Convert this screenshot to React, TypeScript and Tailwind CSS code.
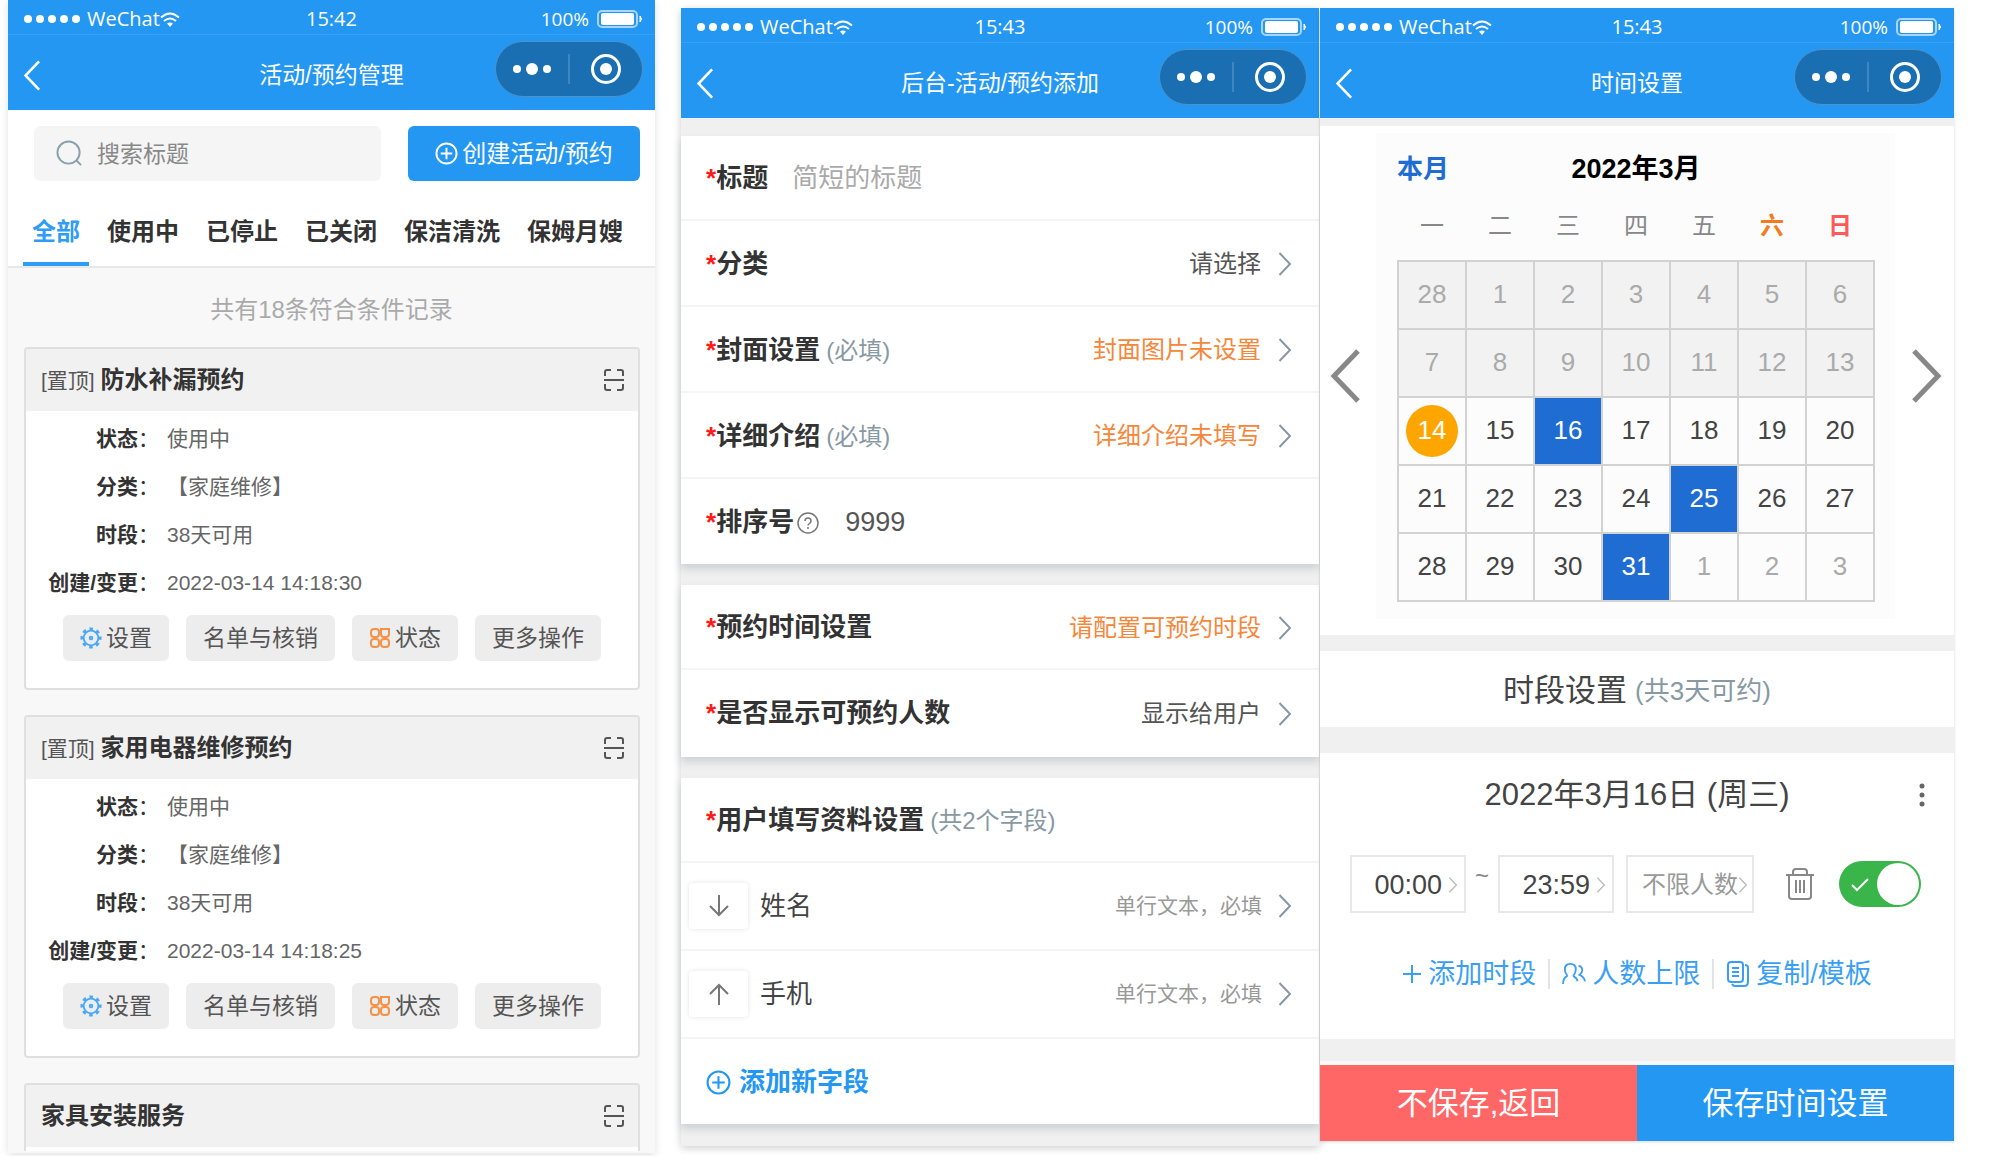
import { useState } from "react";

const tabs = ["全部", "使用中", "已停止", "已关闭", "保洁清洗", "保姆月嫂"];

const records = [
  { title: "防水补漏预约", created: "2022-03-14 14:18:30" },
  { title: "家用电器维修预约", created: "2022-03-14 14:18:25" },
];

const weekdays = ["一", "二", "三", "四", "五", "六", "日"];

const weeks = [
  [28, 1, 2, 3, 4, 5, 6],
  [7, 8, 9, 10, 11, 12, 13],
  [14, 15, 16, 17, 18, 19, 20],
  [21, 22, 23, 24, 25, 26, 27],
  [28, 29, 30, 31, 1, 2, 3],
];

const Chevron = ({ className, left }: { className: string; left?: boolean }) => (
  <svg viewBox="0 0 14 24" fill="none" stroke="currentColor" strokeWidth="2" className={className}>
    <path d={left ? "M12.5 1 2 12l10.5 11" : "M1.5 1 12 12 1.5 23"} />
  </svg>
);

const CirclePlus = ({ className }: { className: string }) => (
  <svg viewBox="0 0 24 24" fill="none" stroke="currentColor" strokeWidth="2" className={className}>
    <circle cx="12" cy="12" r="10.5" />
    <path d="M12 6v12M6 12h12" />
  </svg>
);

const ScanIcon = () => (
  <svg viewBox="0 0 22 22" fill="none" stroke="currentColor" strokeWidth="2" className="size-[22px]">
    <path d="M2 7V3q0-2 2-2h4M14 1h4q2 0 2 2v4M2 15v4q0 2 2 2h4M14 21h4q2 0 2-2v-4M1 11h20" />
  </svg>
);

const GearIcon = () => (
  <svg viewBox="0 0 24 24" fill="none" stroke="currentColor" className="size-[22px] text-[#4aa8f5]">
    <circle cx="12" cy="12" r="8" strokeWidth="2" />
    <circle cx="12" cy="12" r="10" strokeWidth="3" strokeDasharray="3.9 3.95" strokeDashoffset="2" />
    <circle cx="12" cy="12" r="1.500" strokeWidth="2" />
  </svg>
);

const GridIcon = () => (
  <svg viewBox="0 0 22 22" fill="none" stroke="currentColor" strokeWidth="2" className="size-[22px] text-[#f5924a]">
    <rect x="2" y="2" width="8" height="8" rx="3" />
    <path d="M12 2h8v5q0 3-3 3h-2q-3 0-3-3z" />
    <rect x="2" y="12" width="8" height="8" rx="3" />
    <rect x="12" y="12" width="8" height="8" rx="3" />
  </svg>
);

const Header = ({ time, title }: { time: string; title: string }) => (
  <header className="bg-[#2397f2] text-white">
    <div className="grid h-[35px] grid-cols-3 items-center border-b border-[#35a0f4] px-3 pt-1 font-['Open_Sans','Noto_Sans_CJK_SC',sans-serif] text-[20px]">
      <div className="ml-[3px] flex items-center">
        <svg viewBox="0 0 58 12" fill="currentColor" className="mr-1.5 h-3 w-[58px]">
          <circle cx="5" cy="6" r="4" />
          <circle cx="17" cy="6" r="4" />
          <circle cx="29" cy="6" r="4" />
          <circle cx="41" cy="6" r="4" />
          <circle cx="53" cy="6" r="4" />
        </svg>
        <span>WeChat</span>
        <svg viewBox="0 0 20 15" fill="none" stroke="currentColor" strokeWidth="2" className="h-[15px] w-5">
          <path d="M1 5.500q9-8 18 0M4 9q6-5 12 0" />
          <path d="M7 11.500q3-2 6 0L10 15z" fill="currentColor" stroke="none" />
        </svg>
      </div>
      <span className="text-center">{time}</span>
      <div className="flex items-center justify-end gap-2">
        <span className="text-[19px]">100%</span>
        <svg viewBox="0 0 46 18" className="h-[18px] w-[46px]">
          <rect x="1" y="1" width="39" height="16" rx="4" fill="none" stroke="#a8d5fa" strokeWidth="2" />
          <rect x="4" y="3" width="33" height="12" rx="2" fill="#fff" />
          <path d="M43 6q3 3 0 6z" fill="#fff" stroke="#fff" />
        </svg>
      </div>
    </div>
    <div className="grid h-[75px] grid-cols-[1fr_auto_1fr] px-3">
      <button aria-label="返回" className="ml-[3px] mt-6 h-8 w-5 justify-self-start">
        <Chevron left className="h-[31px] w-[18px]" />
      </button>
      <h1 className="mt-6 text-[23px] leading-8">{title}</h1>
      <div className="mt-1.5 flex h-14 w-[148px] items-center justify-self-end rounded-full border border-[#4a93cb] bg-[#1a6eb2]">
        <button aria-label="更多" className="flex flex-1 justify-center">
          <svg viewBox="0 0 40 14" fill="currentColor" className="h-3.5 w-10">
            <circle cx="5" cy="7" r="4" />
            <circle cx="20" cy="7" r="6" />
            <circle cx="35" cy="7" r="4" />
          </svg>
        </button>
        <span className="h-[30px] w-0.5 bg-[#3d86c0]" />
        <button aria-label="关闭" className="flex flex-1 justify-center">
          <svg viewBox="0 0 32 32" className="size-8">
            <circle cx="16" cy="16" r="13.500" fill="none" stroke="#fff" strokeWidth="3" />
            <circle cx="16" cy="16" r="6" fill="#fff" />
          </svg>
        </button>
      </div>
    </div>
  </header>
);

const CardHead = ({ title, pinned }: { title: string; pinned?: boolean }) => (
  <div className="flex h-[62px] items-center justify-between bg-[#f1f1f1] pl-[15px] pr-[13px] text-[#555]">
    <h2 className="text-[21px]">
      {pinned && <span>[置顶] </span>}
      <span className="text-[24px] font-bold text-[#333]">{title}</span>
    </h2>
    <button aria-label="扫码">
      <ScanIcon />
    </button>
  </div>
);

const RecordCard = ({ title, created }: { title: string; created: string }) => {
  const rows = [
    ["状态", "使用中"],
    ["分类", "【家庭维修】"],
    ["时段", "38天可用"],
    ["创建/变更", created],
  ];
  const action = "flex h-[46px] items-center gap-1 rounded-md bg-[#ededed] px-[17px] text-[23px] text-[#555]";

  return (
    <article className="rounded-sm border-2 border-[#dfdfdf] bg-white pb-[27px]">
      <CardHead title={title} pinned />
      <dl className="mt-1 mb-2 text-[21px] text-[#666]">
        {rows.map(([label, value]) => (
          <div key={label} className="flex h-12 items-center gap-2">
            <dt className="w-[133px] shrink-0 whitespace-nowrap text-right text-[#333]">
              <span className="font-bold">{label}</span>：
            </dt>
            <dd>{value}</dd>
          </div>
        ))}
      </dl>
      <div className="flex justify-center gap-[17px]">
        <button className={action}>
          <GearIcon />
          设置
        </button>
        <button className={action}>名单与核销</button>
        <button className={action}>
          <GridIcon />
          状态
        </button>
        <button className={action}>更多操作</button>
      </div>
    </article>
  );
};

const ManagePanel = () => {
  const [active, setActive] = useState("全部");

  return (
    <section className="mr-[26px] min-w-0 flex-[647] self-start bg-[#f8f8f8] pb-0.5 shadow-[0_2px_8px_rgba(0,0,0,0.12)]">
      <Header time="15:42" title="活动/预约管理" />
      <div className="border-b-2 border-[#e8e8e8] bg-white pt-4">
        <div className="flex gap-[27px] pl-[26px] pr-[15px]">
          <label className="flex h-[55px] min-w-0 flex-1 items-center gap-3.5 rounded-md bg-[#f5f5f5] pl-[22px]">
            <svg viewBox="0 0 28 28" fill="none" stroke="#8ba0aa" strokeWidth="2" className="size-[27px] shrink-0">
              <circle cx="13" cy="13" r="11.500" />
              <path d="m21 21 5 5" />
            </svg>
            <input
              aria-label="搜索标题"
              placeholder="搜索标题"
              className="w-full min-w-0 pt-0.5 text-[23px] outline-none placeholder:text-[#888]"
            />
          </label>
          <button className="flex h-[55px] w-[232px] items-center justify-center gap-1 rounded-md bg-[#2397f2] text-[24px] text-white">
            <CirclePlus className="size-[23px]" />
            创建活动/预约
          </button>
        </div>
        <nav className="mt-[15px] flex gap-[9px] pl-[15px]">
          {tabs.map((tab) => (
            <button
              key={tab}
              onClick={() => setActive(tab)}
              className={
                tab === active
                  ? "h-[70px] whitespace-nowrap border-b-4 border-[#2f9df3] px-[9px] pt-1.5 text-[24px] font-bold text-[#2f9df3]"
                  : "h-[70px] whitespace-nowrap border-b-4 border-transparent px-[9px] pt-1.5 text-[24px] font-bold text-[#333]"
              }
            >
              {tab}
            </button>
          ))}
        </nav>
      </div>
      <p className="pt-6 pb-[19px] text-center text-[24px] leading-9 text-[#aaa]">共有18条符合条件记录</p>
      <div className="flex flex-col gap-[25px] pl-4 pr-[15px]">
        {records.map((record) => (
          <RecordCard key={record.title} {...record} />
        ))}
        <article className="rounded-t-sm border-2 border-b-0 border-[#dfdfdf] bg-white pb-1">
          <CardHead title="家具安装服务" />
        </article>
      </div>
    </section>
  );
};

const rowClass =
  "flex h-[86px] items-center border-b-2 border-[#f5f5f5] bg-white pl-[25px] pr-[27px] pt-0.5 first:h-[85px] last:h-[85px] last:border-b-0";

const FieldLabel = ({ text, note }: { text: string; note?: string }) => (
  <span className="whitespace-nowrap text-[26px] font-bold text-[#333]">
    <span className="text-[#ff1a1a]">*</span>
    {text}
    {note && <span className="ml-1.5 text-[24px] font-normal text-[#8799a3]">{note}</span>}
  </span>
);

const PickRow = ({ text, note, value, warn }: { text: string; note?: string; value: string; warn?: boolean }) => (
  <button className={`${rowClass} w-full justify-between text-left`}>
    <FieldLabel text={text} note={note} />
    <span className="flex items-center gap-[17px]">
      <span className={warn ? "text-[24px] text-[#f5873a]" : "text-[24px] text-[#555]"}>{value}</span>
      <Chevron className="h-6 w-3.5 text-[#8799a3]" />
    </span>
  </button>
);

const CustomField = ({ name, up }: { name: string; up?: boolean }) => (
  <div className="flex h-[88px] items-center justify-between border-b-2 border-[#f5f5f5] pl-2 pr-[27px]">
    <div className="flex items-center gap-3">
      <button
        aria-label={up ? "上移" : "下移"}
        className="flex h-[46px] w-[59px] items-center justify-center rounded-sm text-[#777] shadow-[0_0_5px_rgba(0,0,0,0.11)]"
      >
        <svg viewBox="0 0 20 22" fill="none" stroke="currentColor" strokeWidth="2" className="h-[22px] w-5">
          <path d={up ? "M10 22V2M1 11l9-9 9 9" : "M10 0v20M1 11l9 9 9-9"} />
        </svg>
      </button>
      <span className="text-[26px] text-[#444]">{name}</span>
    </div>
    <button className="flex items-center gap-4">
      <span className="text-[21px] text-[#999]">单行文本，必填</span>
      <Chevron className="h-6 w-3.5 text-[#8799a3]" />
    </button>
  </div>
);

const EditPanel = () => {
  const group = "bg-white shadow-[0_5px_8px_rgba(26,50,70,0.16)]";

  return (
    <section className="mr-px mt-2 min-w-0 flex-[638] self-start bg-[#f0f0f0] pb-[22px] shadow-[0_2px_8px_rgba(0,0,0,0.2)]">
      <Header time="15:43" title="后台-活动/预约添加" />
      <div className="mt-[18px] flex flex-col gap-[21px]">
        <div className={group}>
          <label className={rowClass}>
            <FieldLabel text="标题" />
            <input placeholder="简短的标题" className="ml-6 w-full min-w-0 text-[26px] outline-none placeholder:text-[#aaa]" />
          </label>
          <PickRow text="分类" value="请选择" />
          <PickRow text="封面设置" note="(必填)" value="封面图片未设置" warn />
          <PickRow text="详细介绍" note="(必填)" value="详细介绍未填写" warn />
          <label className={rowClass}>
            <FieldLabel text="排序号" />
            <svg viewBox="0 0 22 22" fill="none" stroke="#777" strokeWidth="1.500" className="ml-[3px] size-[22px] shrink-0">
              <circle cx="11" cy="11" r="10" />
              <path d="M8 9q0-3 3-3t3 3q0 1.500-1.500 2.500T11 13.500M11 15v2" />
            </svg>
            <input defaultValue="9999" className="ml-[26px] w-full min-w-0 text-[27px] text-[#555] outline-none" />
          </label>
        </div>
        <div className={`${group} pb-0.5`}>
          <PickRow text="预约时间设置" value="请配置可预约时段" warn />
          <PickRow text="是否显示可预约人数" value="显示给用户" />
        </div>
        <div className={group}>
          <div className={rowClass}>
            <FieldLabel text="用户填写资料设置" note="(共2个字段)" />
          </div>
          <CustomField name="姓名" />
          <CustomField name="手机" up />
          <button className={`${rowClass} w-full gap-2 text-[26px] font-bold text-[#2397f2]`}>
            <CirclePlus className="size-[25px]" />
            添加新字段
          </button>
        </div>
      </div>
    </section>
  );
};

const Calendar = () => {
  const [picked, setPicked] = useState<any>(["2-16", "3-25", "4-31"]);

  const toggle = (key: any) => {
    if (picked.includes(key)) {
      setPicked(picked.filter((k: any) => k !== key));
      return;
    }
    setPicked([...picked, key]);
  };

  const numberClass = (key: string, day: number, week: number) => {
    if (picked.includes(key)) return "size-full bg-[#1f6dd3] text-white";
    if (week === 2 && day === 14) return "size-[52px] rounded-full bg-[#ffa500] text-white";
    if (week < 2 || (week === 4 && day < 4)) return "size-full text-[#aaa]";
    return "size-full text-[#444]";
  };

  return (
    <div className="flex items-center justify-between bg-white pt-[7px] pb-4 pl-2.5 pr-3">
      <button aria-label="上个月">
        <svg viewBox="0 0 30 56" fill="none" stroke="#888" strokeWidth="5" className="h-14 w-[30px]">
          <path d="M28 3 4 28l24 25" />
        </svg>
      </button>
      <div className="ml-4 mr-[17px] flex-1 bg-[#fcfcfc] pt-4 pb-[17px] pl-[21px] pr-5">
        <div className="grid h-10 grid-cols-[1fr_auto_1fr] items-center text-[26px] font-bold">
          <button className="justify-self-start text-[#1f6dd3]">本月</button>
          <span className="text-[27px] text-black">2022年3月</span>
        </div>
        <table className="w-full table-fixed border-collapse">
          <thead>
            <tr className="h-[72px]">
              {weekdays.map((d, i) => (
                <th
                  key={d}
                  className={
                    i === 5
                      ? "pt-0.5 text-[24px] font-bold text-[#f37b1d]"
                      : i === 6
                        ? "pt-0.5 text-[24px] font-bold text-[#ff5a5a]"
                        : "pt-0.5 text-[24px] font-normal text-[#888]"
                  }
                >
                  {d}
                </th>
              ))}
            </tr>
          </thead>
          <tbody>
            {weeks.map((week, w) => (
              <tr key={w} className={w < 2 ? "h-[68px] bg-[#f2f2f2]" : "h-[68px]"}>
                {week.map((day) => (
                  <td key={day} className="h-[68px] border-2 border-[#d2d2d2] p-0 text-center">
                    <button
                      onClick={() => toggle(`${w}-${day}`)}
                      className={`${numberClass(`${w}-${day}`, day, w)} pb-0.5 align-middle text-[26px]`}
                    >
                      {day}
                    </button>
                  </td>
                ))}
              </tr>
            ))}
          </tbody>
        </table>
      </div>
      <button aria-label="下个月">
        <svg viewBox="0 0 30 56" fill="none" stroke="#888" strokeWidth="5" className="h-14 w-[30px]">
          <path d="m2 3 24 25L2 53" />
        </svg>
      </button>
    </div>
  );
};

const TimePanel = () => {
  const [enabled, setEnabled] = useState(true);
  const slot = "flex h-[58px] items-center justify-end border-2 border-[#e8e8e8] pt-0.5";
  const link = "flex items-center gap-1.5 whitespace-nowrap";

  return (
    <section className="mt-2 min-w-0 flex-[634] self-start bg-[#f0f0f0] shadow-[0_1px_3px_rgba(0,0,0,0.15)]">
      <Header time="15:43" title="时间设置" />
      <div className="pt-2">
        <Calendar />
      </div>
      <h2 className="mt-4 flex h-[76px] items-center justify-center gap-2 bg-white pt-1 text-[31px] text-[#444]">
        时段设置 <span className="text-[26px] text-[#8799a3]">(共3天可约)</span>
      </h2>
      <div className="mt-[26px] bg-white pb-12">
        <div className="grid h-[82px] grid-cols-[1fr_auto_1fr] items-center pr-7 pt-0.5">
          <span />
          <h3 className="pl-7 text-[31px] text-[#444]">2022年3月16日 (周三)</h3>
          <button aria-label="更多" className="justify-self-end">
            <svg viewBox="0 0 8 26" fill="#666" className="h-[26px] w-2">
              <circle cx="4" cy="4" r="2.500" />
              <circle cx="4" cy="13" r="2.500" />
              <circle cx="4" cy="22" r="2.500" />
            </svg>
          </button>
        </div>
        <div className="mt-5 flex items-center pl-[30px] pr-[33px]">
          <button className={`${slot} w-[116px] gap-1.5 pr-1.5 text-[27px] text-[#444]`}>
            00:00
            <Chevron className="h-4 w-2.5 text-[#bbb]" />
          </button>
          <span className="mb-4 w-8 text-center text-[24px] text-[#888]">~</span>
          <button className={`${slot} w-[116px] gap-1.5 pr-1.5 text-[27px] text-[#444]`}>
            23:59
            <Chevron className="h-4 w-2.5 text-[#bbb]" />
          </button>
          <button className={`${slot} ml-3 w-[128px] whitespace-nowrap pr-1 text-[24px] text-[#999]`}>
            不限人数
            <Chevron className="h-4 w-2.5 text-[#bbb]" />
          </button>
          <button aria-label="删除" className="ml-auto">
            <svg viewBox="0 0 30 32" fill="none" stroke="#888" strokeWidth="2" className="h-8 w-[30px]">
              <path d="M1 7h28M8 7V4q0-3 3-3h8q3 0 3 3v3M4 7v21q0 3 3 3h16q3 0 3-3V7M11 12v13M15 12v13M19 12v13" />
            </svg>
          </button>
          <label className="relative ml-6 block h-[46px] w-[82px] shrink-0 cursor-pointer">
            <input
              type="checkbox"
              aria-label="启用时段"
              checked={enabled}
              onChange={(e: any) => setEnabled(e.target.checked)}
              className="peer size-full appearance-none rounded-full bg-[#ccc] checked:bg-[#39b54a]"
            />
            <span className="pointer-events-none absolute left-0.5 top-0.5 size-[42px] rounded-full bg-white peer-checked:left-[38px]" />
            <svg viewBox="0 0 18 14" fill="none" stroke="#fff" strokeWidth="2" className="pointer-events-none absolute left-3 top-[17px] h-3.5 w-[18px]">
              <path d="m1 7 5 5L17 1" />
            </svg>
          </label>
        </div>
        <div className="mt-10 flex h-[38px] items-center justify-center gap-3 pt-1 text-[27px] text-[#3a9ff4]">
          <button className={link}>
            <svg viewBox="0 0 20 20" fill="none" stroke="currentColor" strokeWidth="2" className="size-5">
              <path d="M10 1v18M1 10h18" />
            </svg>
            添加时段
          </button>
          <span className="h-[30px] w-0.5 bg-[#e3e3e3]" />
          <button className={link}>
            <svg viewBox="0 0 26 24" fill="none" stroke="currentColor" strokeWidth="2" className="h-[22px] w-6">
              <path d="M6 14q-3-3-3-7 0-6 6-6t6 6q0 4-3 7M1 23q0-7 5-9M12 14q4 2 5 6M18 3q4 1 4 5 0 3-3 5 5 2 6 7" />
            </svg>
            人数上限
          </button>
          <span className="h-[30px] w-0.5 bg-[#e3e3e3]" />
          <button className={link}>
            <svg viewBox="0 0 24 26" fill="none" stroke="currentColor" strokeWidth="2" className="h-[26px] w-6">
              <rect x="2" y="1" width="15" height="20" rx="3" />
              <path d="M6 7h7M6 11h7M6 15h7M19 4q3 0 3 3v14q0 4-4 4H9q-2 0-3-2" />
            </svg>
            复制/模板
          </button>
        </div>
      </div>
      <div className="mt-[22px] grid grid-cols-2 border-t-4 border-[#f8f8f8] text-[31px] text-white">
        <button className="h-[76px] bg-[#ff6666] pt-0.5">不保存,返回</button>
        <button className="h-[76px] bg-[#2397f2] pt-0.5">保存时间设置</button>
      </div>
    </section>
  );
};

export default function App() {
  return (
    <main className="flex bg-white pb-1 pl-2 pr-9 font-['Liberation_Sans','Noto_Sans_CJK_SC',sans-serif]">
      <ManagePanel />
      <EditPanel />
      <TimePanel />
    </main>
  );
}
